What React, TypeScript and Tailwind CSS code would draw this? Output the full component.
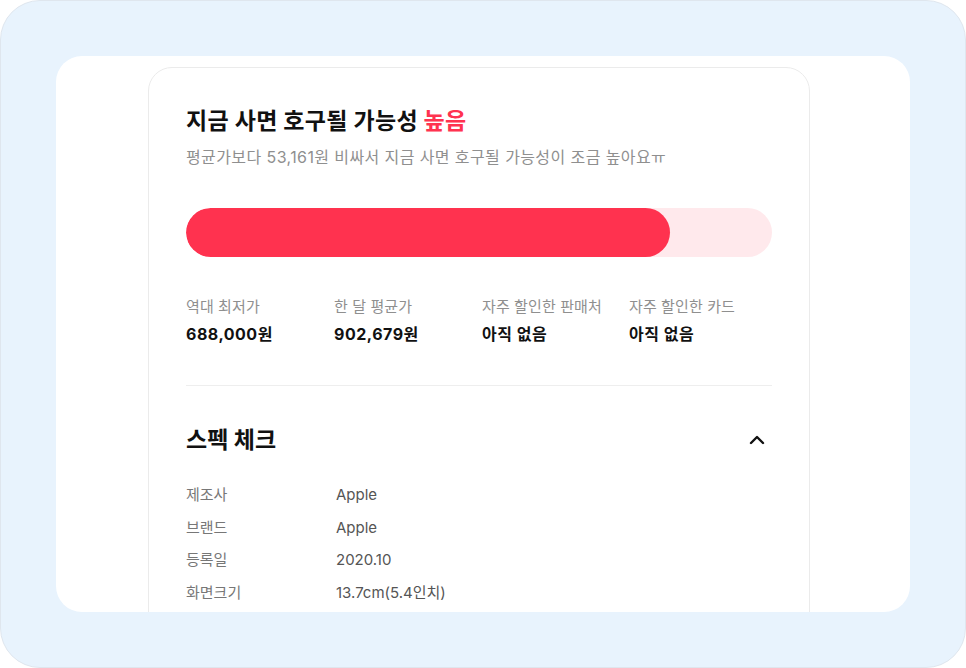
import React from "react";
import { ChevronUp } from "lucide-react";

const stats = [
  { label: "역대 최저가", value: "688,000원" },
  { label: "한 달 평균가", value: "902,679원" },
  { label: "자주 할인한 판매처", value: "아직 없음" },
  { label: "자주 할인한 카드", value: "아직 없음" },
];

const specs = [
  { label: "제조사", value: "Apple" },
  { label: "브랜드", value: "Apple" },
  { label: "등록일", value: "2020.10" },
  { label: "화면크기", value: "13.7cm(5.4인치)" },
];

const App = () => {
  const ratio = 82.6;
  return (
    <div
      className="w-[966px] h-[668px] bg-white"
      style={{ fontFamily: 'Inter, "Noto Sans CJK KR", sans-serif' }}
    >
      <div className="w-full h-full rounded-[40px] bg-[#e8f3fd] border border-[#dfe6ee] p-[55px]">
        <div className="w-full h-full rounded-[26px] bg-white overflow-hidden pl-[92px] pt-[11px]">
          <div className="w-[662px] rounded-[24px] border border-[#ebebeb] px-[37px] pt-[38px] pb-10">
            {/* Headline */}
            <h2 className="text-[23px] leading-[30px] font-bold text-[#111] tracking-[0.3px]">
              지금 사면 호구될 가능성 <span className="text-[#ff3350]">높음</span>
            </h2>
            <p className="mt-[11px] text-[16px] leading-[20px] text-[#8f8f8f] tracking-[0.4px]">
              평균가보다 53,161원 비싸서 지금 사면 호구될 가능성이 조금 높아요ㅠ
            </p>

            {/* Gauge */}
            <div className="mt-[41px] h-[49px] rounded-full bg-[#ffe9ec] overflow-hidden">
              <div className="h-full rounded-full bg-[#ff324f]" style={{ width: `${ratio}%` }} />
            </div>

            {/* Price stats */}
            <div className="mt-[39px] grid grid-cols-[148px_148px_147px_1fr] pb-[40px] border-b border-[#eeeeee]">
              {stats.map((s) => (
                <div key={s.label}>
                  <div className="text-[15px] leading-[22px] text-[#8f8f8f] tracking-[0.1px]">{s.label}</div>
                  <div className="mt-[5px] text-[16px] leading-[22px] font-bold text-[#111] tracking-[0.5px]">{s.value}</div>
                </div>
              ))}
            </div>

            {/* Spec check */}
            <div className="mt-[39px] flex items-center justify-between">
              <h3 className="text-[23px] leading-[30px] font-bold text-[#111]">스펙 체크</h3>
              <ChevronUp className="w-6 h-6 text-[#111] mr-[3px]" strokeWidth={2.4} />
            </div>
            <div className="mt-[29px] flex flex-col gap-[11px]">
              {specs.map((s) => (
                <div key={s.label} className="flex text-[15px] leading-[21.5px]">
                  <div className="w-[150px] text-[#777]">{s.label}</div>
                  <div className="text-[#555]">{s.value}</div>
                </div>
              ))}
            </div>
          </div>
        </div>
      </div>
    </div>
  );
};

export default App;
